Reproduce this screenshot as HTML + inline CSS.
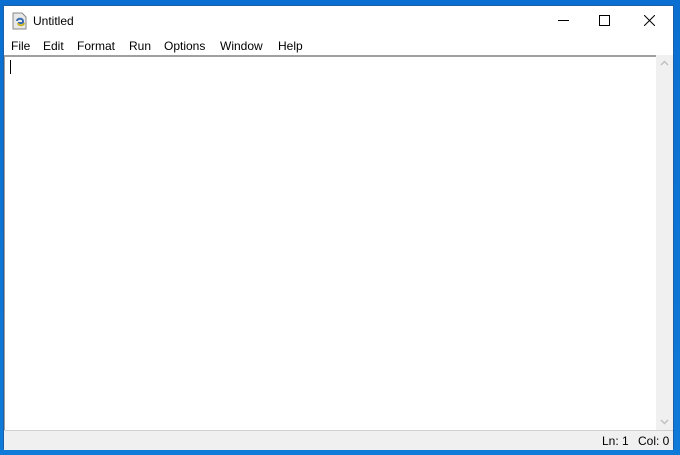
<!DOCTYPE html>
<html><head><style>
body{margin:0;width:680px;height:455px;overflow:hidden;background:linear-gradient(180deg,#0a6fd0,#0f7ad8);position:relative;font-family:"Liberation Sans",sans-serif;font-size:12px;color:#000}
.win{position:absolute;left:3px;top:5px;width:671px;height:444px;background:#fff;border:1px solid #1a5fa8;box-sizing:border-box}
.title{position:absolute;left:0;top:0;right:0;height:30px}
.title span{position:absolute;left:29px;top:8px;font-size:12px}
.menu{position:absolute;left:0;top:29px;height:20px;right:0}
.menu span{position:absolute;top:4px}
.edit{position:absolute;left:0;top:49px;width:652px;height:375px;border-top:2px solid #a0a0a0;border-left:1px solid #a0a0a0;box-sizing:border-box}
.sb{position:absolute;left:652px;top:49px;width:17px;height:375px;background:#f0f0f0}
.status{position:absolute;left:0;top:424px;right:0;height:19px;background:#f0f0f0;border-top:1px solid #d0d0d0}
</style></head><body>
<div class="win">
<div class="title">
<svg style="position:absolute;left:8px;top:6px" width="16" height="18" viewBox="0 0 16 18"><path d="M1 1h9l4 4v12H1z" fill="#e8e8e8" stroke="#888"/><path d="M5 9c0-3 6-3 6 0v2H6" fill="none" stroke="#3a6db0" stroke-width="2"/><path d="M12 11c0 3-6 3-6 0" fill="none" stroke="#c9b32a" stroke-width="2"/></svg>
<span>Untitled</span>
<div style="position:absolute;left:554px;top:14px;width:11px;height:1px;background:#000"></div>
<div style="position:absolute;left:595px;top:9px;width:9px;height:9px;border:1px solid #000"></div>
<svg style="position:absolute;left:640px;top:9px" width="11" height="11"><path d="M0 0L11 11M11 0L0 11" stroke="#000"/></svg>
</div>
<div class="menu">
<span style="left:7px">File</span><span style="left:39px">Edit</span><span style="left:73px">Format</span><span style="left:125px">Run</span><span style="left:160px">Options</span><span style="left:216px">Window</span><span style="left:274px">Help</span>
</div>
<div class="edit"><div style="position:absolute;left:5px;top:3px;width:1px;height:14px;background:#000"></div></div>
<div class="sb">
<svg style="position:absolute;left:4px;top:5px" width="9" height="6"><path d="M1 5L4.5 1.5L8 5" fill="none" stroke="#c0c0c0" stroke-width="1.5"/></svg>
<svg style="position:absolute;left:4px;top:364px" width="9" height="6"><path d="M1 1L4.5 4.5L8 1" fill="none" stroke="#c0c0c0" stroke-width="1.5"/></svg>
</div>
<div class="status"><span style="position:absolute;left:598px;top:3px">Ln: 1</span><span style="position:absolute;left:634px;top:3px">Col: 0</span></div>
</div>
</body></html>
